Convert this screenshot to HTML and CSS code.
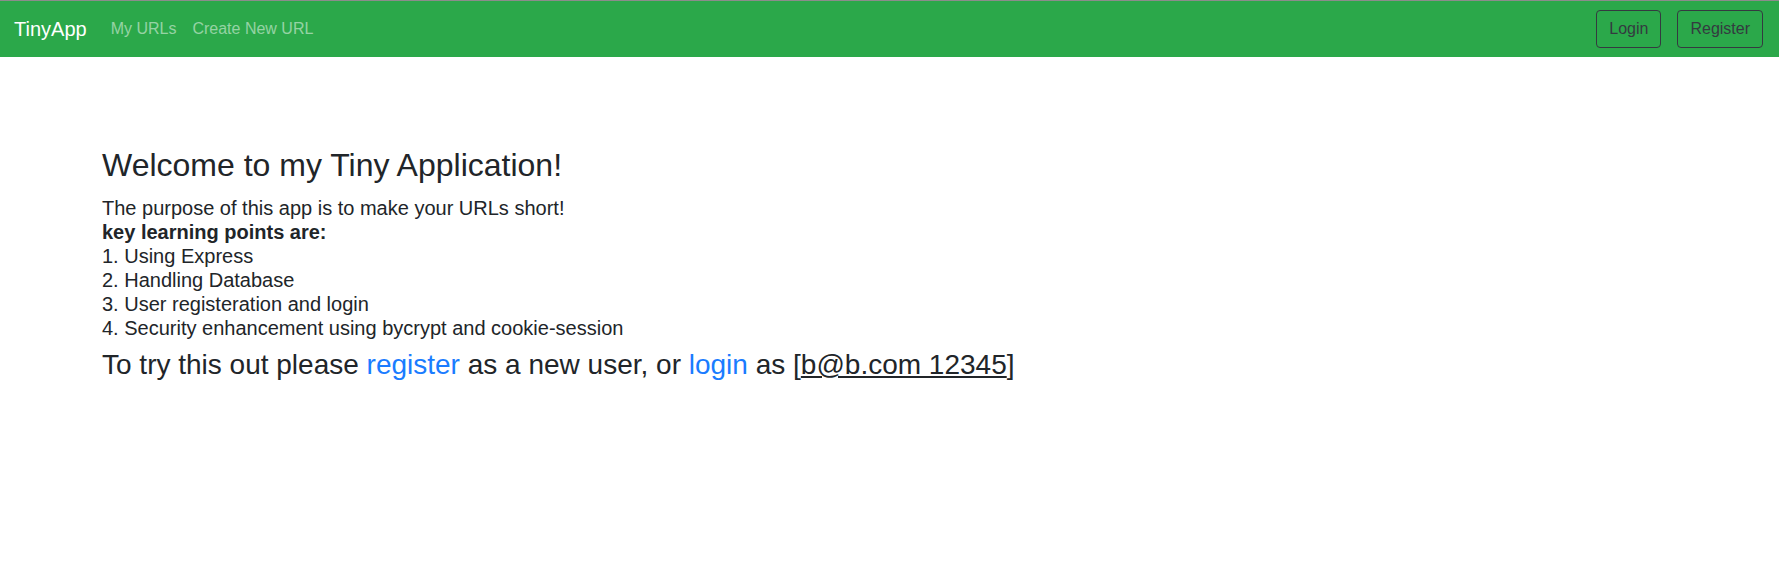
FILE: index.html
```html
<!DOCTYPE html>
<html lang="en">
<head>
<meta charset="utf-8">
<title>TinyApp</title>
<link rel="stylesheet" href="styles.css">
</head>
<body>
<nav class="navbar">
  <div class="nav-left">
    <a class="brand" href="#">TinyApp</a>
    <a class="nav-link" href="#">My URLs</a>
    <a class="nav-link" href="#">Create New URL</a>
  </div>
  <div class="nav-right">
    <a class="btn" href="#">Login</a>
    <a class="btn" href="#">Register</a>
  </div>
</nav>
<main class="content">
  <h2 class="title">Welcome to my Tiny Application!</h2>
  <div class="points">
    <div>The purpose of this app is to make your URLs short!</div>
    <div class="bold">key learning points are:</div>
    <div>1. Using Express</div>
    <div>2. Handling Database</div>
    <div>3. User registeration and login</div>
    <div>4. Security enhancement using bycrypt and cookie-session</div>
  </div>
  <p class="try">To try this out please <a class="link" href="#">register</a> as a new user, or <a class="link" href="#">login</a> as [<u>b@b.com 12345</u>]</p>
</main>
</body>
</html>
```
FILE: styles.css
```css
* { box-sizing: border-box; }
html, body {
  margin: 0;
  padding: 0;
  background: #fff;
  font-family: "Liberation Sans", Arial, sans-serif;
  color: #212529;
}
.navbar {
  display: flex;
  justify-content: space-between;
  align-items: center;
  background: #2ba84a;
  border-top: 1px solid #8c8c8c;
  padding: 8px 16px 8px 14px;
  height: 57px;
}
.nav-left {
  display: flex;
  align-items: center;
}
.brand {
  color: #fff;
  font-size: 20px;
  line-height: 30px;
  padding: 5px 0;
  margin-right: 16px;
  text-decoration: none;
}
.nav-link {
  color: rgba(255, 255, 255, 0.5);
  font-size: 16px;
  line-height: 24px;
  padding: 8px;
  text-decoration: none;
}
.nav-right {
  display: flex;
  align-items: center;
  gap: 16px;
}
.btn {
  display: inline-block;
  border: 1px solid #343a40;
  border-radius: 4px;
  color: #343a40;
  font-size: 16px;
  line-height: 24px;
  padding: 6px 12px;
  text-decoration: none;
}
.content {
  padding: 89px 102px 0;
}
.title {
  margin: 0 0 12px;
  font-size: 32px;
  font-weight: 400;
  line-height: 1.2;
}
.points {
  font-size: 20px;
  line-height: 24px;
}
.bold { font-weight: 700; }
.try {
  margin: 8px 0 0;
  font-size: 28px;
  line-height: 1.2;
}
.link {
  color: #1a7cff;
  text-decoration: none;
}
.try u { text-decoration: underline; }
```
